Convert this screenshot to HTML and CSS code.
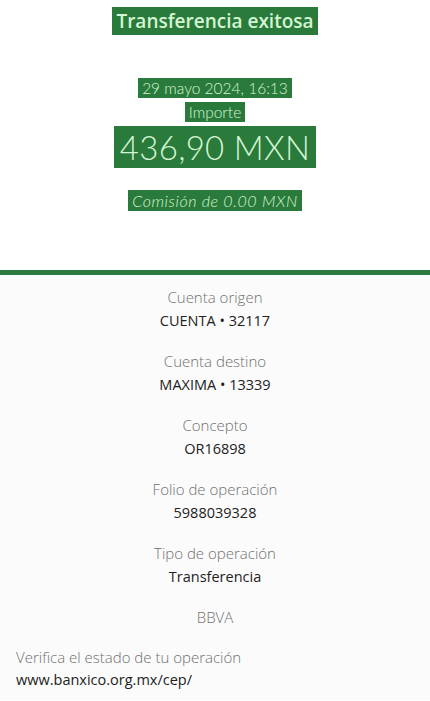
FILE: index.html
```html
<!DOCTYPE html>
<html lang="es">
<head>
    <meta charset="UTF-8">
    <meta name="viewport" content="width=device-width, initial-scale=1.0">
    <title>Transferencia exitosa</title>
    <link rel="stylesheet" href="styles.css">
</head>
<body>
    <header class="summary">
        <h1><span class="hl">Transferencia exitosa</span></h1>
        <p class="date"><span class="hl">29 mayo 2024, 16:13</span></p>
        <p class="label"><span class="hl">Importe</span></p>
        <p class="amount"><span class="hl">436,90 MXN</span></p>
        <p class="fee"><span class="hl">Comisión de 0.00 MXN</span></p>
    </header>

    <div class="divider"></div>

    <section class="details">
        <div class="row">
            <span class="key">Cuenta origen</span>
            <span class="val">CUENTA • 32117</span>
        </div>
        <div class="row">
            <span class="key">Cuenta destino</span>
            <span class="val">MAXIMA • 13339</span>
        </div>
        <div class="row">
            <span class="key">Concepto</span>
            <span class="val">OR16898</span>
        </div>
        <div class="row">
            <span class="key">Folio de operación</span>
            <span class="val">5988039328</span>
        </div>
        <div class="row">
            <span class="key">Tipo de operación</span>
            <span class="val">Transferencia</span>
        </div>
        <div class="row">
            <span class="key">BBVA</span>
        </div>

        <div class="verify">
            <span class="key">Verifica el estado de tu operación</span>
            <span class="val">www.banxico.org.mx/cep/</span>
        </div>
    </section>
</body>
</html>
```

FILE: styles.css
```css
/* comprobante */

body {
    margin: 0;
    font-family: 'Open Sans', 'Lato', sans-serif;
    background: #fff;
    color: #222;
}

.summary {
    text-align: center;
    padding: 9px 0 0;
    height: 260px;
    box-sizing: border-box;
}

.summary p, .summary h1 { margin: 0; }

.hl {
    background: #2a7a3c;
    color: #d4f5d2;
    padding: 1px 4px;
}

h1 {
    font-size: 19px;
    font-weight: 600;
    line-height: 24px;
}

.date, .label, .amount, .fee {
    font-family: 'Lato', sans-serif;
    font-weight: 300;
}

.date {
    margin-top: 45px !important;
    font-size: 15.5px;
    line-height: 20px;
}

.label {
    margin-top: 4px !important;
    font-size: 15.5px;
    line-height: 20px;
}

.amount {
    margin-top: 5px !important;
    font-size: 33px;
    line-height: 40px;
    letter-spacing: 0.3px;
}

.amount .hl { padding: 1px 6px; }

.fee {
    margin-top: 24px !important;
    font-size: 16px;
    font-style: italic;
    line-height: 20px;
    letter-spacing: 0.6px;
}

.divider {
    height: 5px;
    background: #2d7a3e;
    margin-top: 10px;
}

.details {
    background: #fbfbfb;
    padding: 12px 0 10px;
}

.row {
    display: flex;
    flex-direction: column;
    align-items: center;
    gap: 4px;
    margin-bottom: 20px;
}

.key {
    font-size: 15px;
    font-weight: 300;
    color: #707070;
    line-height: 20px;
}

.val {
    font-size: 14.5px;
    color: #222;
    line-height: 20px;
}

.verify {
    display: flex;
    flex-direction: column;
    gap: 3px;
    padding: 0 16px;
    margin-top: 9px;
}
```
